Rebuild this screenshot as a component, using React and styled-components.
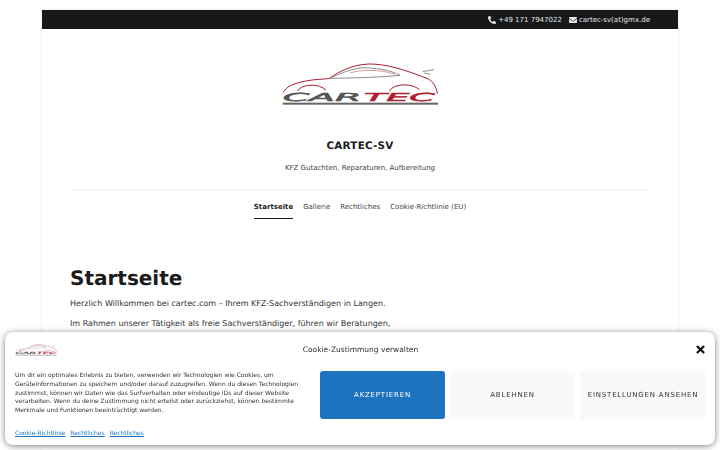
import React from 'react'
import styled, { createGlobalStyle } from 'styled-components'
import { FaPhoneAlt, FaEnvelope } from 'react-icons/fa'

const GlobalStyle = createGlobalStyle`
  html, body {
    margin: 0;
    height: 100%;
    overflow: hidden;
    background: #fff;
    font-family: "DejaVu Sans", sans-serif;
    color: #333;
    text-rendering: geometricPrecision;
  }
`

const Page = styled.div`
  width: 636px;
  height: 440px;
  margin: 10px auto 0 42px;
  box-shadow: 0 0 2px rgba(0, 0, 0, 0.16);
  overflow: hidden;
`

const TopBar = styled.div`
  height: 19px;
  background: #17181a;
  color: #e8e8e8;
  display: flex;
  justify-content: flex-end;
  align-items: center;
  gap: 7px;
  padding-right: 28px;
  font-size: 7px;
`

const TopItem = styled.span`
  display: flex;
  align-items: center;
  gap: 2px;
  svg {
    font-size: 8px;
  }
`

const Header = styled.header`
  margin: 0 28px;
  padding-top: 33px;
  height: 127px;
  box-sizing: content-box;
  border-bottom: 1px solid #f5f1e8;
  display: flex;
  flex-direction: column;
  align-items: center;
`

const SiteTitle = styled.h1`
  margin: 33px 0 0;
  font-size: 10.4px;
  line-height: 15px;
  font-weight: 700;
  letter-spacing: 0.2px;
  color: #1b1b1b;
`

const Tagline = styled.p`
  margin: 8px 0 0;
  font-size: 7px;
  line-height: 12px;
  color: #444;
`

const Nav = styled.nav`
  display: flex;
  justify-content: center;
  gap: 10px;
  padding-top: 11px;
`

const NavItem = styled.a`
  font-size: 7px;
  line-height: 12px;
  padding-bottom: 6px;
  height: 11px;
  color: ${(props) => (props.$active ? '#1c1c1c' : '#444')};
  font-weight: ${(props) => (props.$active ? 700 : 400)};
  border-bottom: 1px solid ${(props) => (props.$active ? '#1c1c1c' : 'transparent')};
`

const Content = styled.main`
  padding: 47px 28px 0;
`

const Heading = styled.h2`
  margin: 0 0 8px;
  font-size: 20px;
  line-height: 24px;
  font-weight: 700;
  color: #1b1b1b;
`

const Para = styled.p`
  margin: 0 0 8px;
  font-size: 8px;
  line-height: 12px;
  color: #333;
`

const Banner = styled.div`
  position: fixed;
  left: 5px;
  top: 332px;
  width: 710px;
  height: 113px;
  box-sizing: border-box;
  background: #fff;
  border-radius: 8px;
  box-shadow: 0 1px 6px rgba(0, 0, 0, 0.5);
  display: grid;
  grid-template-columns: 305px 1fr;
  grid-template-rows: 34px 1fr;
  padding: 0 10px 0 10px;
`

const BannerLogo = styled.div`
  display: flex;
  align-items: center;
  padding-top: 2px;
`

const BannerTitle = styled.div`
  position: relative;
  display: flex;
  justify-content: center;
  align-items: center;
  font-size: 7.5px;
  color: #333;
  margin-left: -305px;
  padding-top: 1px;
`

const CloseIcon = styled.svg`
  position: absolute;
  right: 1px;
  top: 13px;
`

const BannerText = styled.div`
  display: flex;
  flex-direction: column;
  justify-content: space-between;
  padding: 6px 0 7px;
`

const Message = styled.p`
  margin: 0;
  font-size: 6px;
  line-height: 8.8px;
  color: #333;
  white-space: nowrap;
`

const Links = styled.div`
  display: flex;
  gap: 5px;
`

const PolicyLink = styled.a`
  font-size: 6px;
  line-height: 9px;
  color: #1e73be;
  text-decoration: underline;
`

const Buttons = styled.div`
  display: grid;
  grid-template-columns: 125px 125px 126px;
  gap: 5px;
  height: 48px;
  margin-top: 5px;
`

const Btn = styled.button`
  border: none;
  border-radius: 3px;
  padding: 0 0 1px;
  font-family: inherit;
  font-size: 7px;
  letter-spacing: 0.8px;
  text-rendering: geometricPrecision;
  background: ${(props) => (props.$primary ? '#1e73be' : '#f9f9f9')};
  color: ${(props) => (props.$primary ? '#fff' : '#333')};
`

const Logo = ({ width }) => (
  <svg width={width} viewBox="63 35 474 132" fill="none">
    <path d="M70 126 C80 108 100 98 150 90 C175 86 195 87 208 84 C240 62 275 44 325 41 C375 40 430 56 505 86 C520 94 530 112 532 130" stroke="#a61d2d" strokeWidth="3" />
    <path d="M210 84 C260 83 350 82 420 75 C395 60 340 50 300 53 C265 58 235 72 210 84 Z" stroke="#8c8c8c" strokeWidth="3" />
    <path d="M270 68 C300 58 360 56 405 72" stroke="#b33a46" strokeWidth="1.5" />
    <path d="M488 64 L522 58 M492 68 L512 72" stroke="#777" strokeWidth="2.5" />
    <path d="M112 122 C125 100 178 98 198 120" stroke="#a61d2d" strokeWidth="3" />
    <path d="M388 122 C402 98 458 98 478 118" stroke="#a61d2d" strokeWidth="3" />
    <text x="68" y="153" fontFamily="DejaVu Sans" fontStyle="oblique" fontSize="33" textLength="236" lengthAdjust="spacingAndGlyphs" fill="#555" stroke="#555" strokeWidth="1.5">CAR</text>
    <text x="312" y="153" fontFamily="DejaVu Sans" fontStyle="oblique" fontSize="33" textLength="212" lengthAdjust="spacingAndGlyphs" fill="#b01f2e" stroke="#b01f2e" strokeWidth="1.5">TEC</text>
    <rect x="68" y="157" width="466" height="6" fill="#666" />
  </svg>
)

export default function App() {
  return (
    <>
      <GlobalStyle />
      <Page>
        <TopBar>
          <TopItem><FaPhoneAlt /> +49 171 7947022</TopItem>
          <TopItem><FaEnvelope /> cartec-sv(at)gmx.de</TopItem>
        </TopBar>
        <Header>
          <Logo width={158} />
          <SiteTitle>CARTEC-SV</SiteTitle>
          <Tagline>KFZ Gutachten, Reparaturen, Aufbereitung</Tagline>
        </Header>
        <Nav>
          <NavItem $active>Startseite</NavItem>
          <NavItem>Gallerie</NavItem>
          <NavItem>Rechtliches</NavItem>
          <NavItem>Cookie-Richtlinie (EU)</NavItem>
        </Nav>
        <Content>
          <Heading>Startseite</Heading>
          <Para>Herzlich Willkommen bei cartec.com – Ihrem KFZ-Sachverständigen in Langen.</Para>
          <Para>Im Rahmen unserer Tätigkeit als freie Sachverständiger, führen wir Beratungen,</Para>
        </Content>
      </Page>
      <Banner>
        <BannerLogo><Logo width={42} /></BannerLogo>
        <BannerTitle>
          Cookie-Zustimmung verwalten
          <CloseIcon width="9" height="9" viewBox="0 0 10 10">
            <path d="M1 1 L9 9 M9 1 L1 9" stroke="#111" strokeWidth="2.4" />
          </CloseIcon>
        </BannerTitle>
        <BannerText>
          <Message>
            Um dir ein optimales Erlebnis zu bieten, verwenden wir Technologien wie Cookies, um<br />
            Geräteinformationen zu speichern und/oder darauf zuzugreifen. Wenn du diesen Technologien<br />
            zustimmst, können wir Daten wie das Surfverhalten oder eindeutige IDs auf dieser Website<br />
            verarbeiten. Wenn du deine Zustimmung nicht erteilst oder zurückziehst, können bestimmte<br />
            Merkmale und Funktionen beeinträchtigt werden.
          </Message>
          <Links>
            <PolicyLink>Cookie-Richtlinie</PolicyLink>
            <PolicyLink>Rechtliches</PolicyLink>
            <PolicyLink>Rechtliches</PolicyLink>
          </Links>
        </BannerText>
        <Buttons>
          <Btn $primary>AKZEPTIEREN</Btn>
          <Btn>ABLEHNEN</Btn>
          <Btn>EINSTELLUNGEN ANSEHEN</Btn>
        </Buttons>
      </Banner>
    </>
  )
}
